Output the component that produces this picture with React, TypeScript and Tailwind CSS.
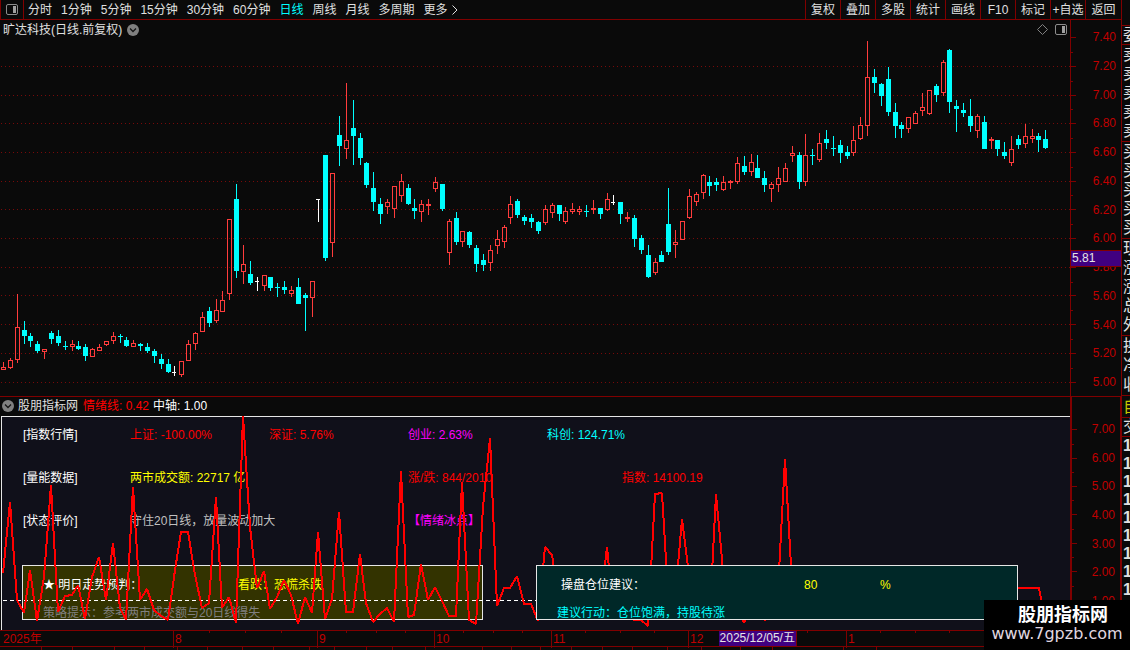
import { clsx } from 'clsx'

type Kind = 'up' | 'down' | 'flat'
type Bar = [x: number, high: number, top: number, bottom: number, low: number]

const PERIODS = ['分时', '1分钟', '5分钟', '15分钟', '30分钟', '60分钟', '日线', '周线', '月线', '多周期']
const TOOLS = ['复权', '叠加', '多股', '统计', '画线', 'F10', '标记', '+自选', '返回']

const PRICE_LABELS = ['7.40', '7.20', '7.00', '6.80', '6.60', '6.40', '6.20', '6.00', '5.80', '5.60', '5.40', '5.20', '5.00']
const PRICE_TICKS = [37, 66, 95, 123, 152, 181, 209, 238, 267, 295, 324, 353, 382]
const PRICE_MINOR = [52, 81, 109, 138, 167, 195, 224, 282, 310, 339, 368]

const MOOD_LABELS = ['7.00', '6.00', '5.00', '4.00', '3.00', '2.00', '1.00']
const MOOD_TICKS = [429, 458, 486, 514, 543, 571, 600]
const MOOD_MINOR = [444, 472, 500, 529, 557, 586]

const UP: Bar[] = [
  [3, 362, 367, 370, 370], [10, 358, 360, 368, 369], [17, 294, 327, 360, 363], [44, 349, 349, 352, 359],
  [72, 340, 344, 347, 351], [92, 348, 349, 357, 357], [99, 344, 347, 351, 351], [106, 341, 341, 345, 346],
  [113, 332, 336, 341, 344], [133, 340, 343, 347, 347], [181, 361, 361, 375, 377], [188, 340, 344, 361, 361],
  [195, 332, 333, 344, 350], [202, 312, 317, 332, 332], [216, 299, 310, 321, 323], [222, 291, 300, 312, 312],
  [229, 219, 219, 294, 300], [243, 245, 264, 272, 284], [264, 275, 275, 286, 291], [291, 286, 290, 294, 297],
  [312, 281, 281, 298, 317], [332, 173, 173, 243, 257], [346, 83, 140, 149, 159], [387, 199, 202, 207, 214],
  [394, 186, 186, 209, 218], [401, 174, 181, 196, 202], [421, 200, 204, 212, 222], [428, 199, 204, 206, 215],
  [435, 177, 182, 189, 192], [449, 219, 221, 253, 265], [462, 231, 231, 242, 247], [490, 245, 250, 263, 271],
  [497, 230, 239, 246, 254], [504, 225, 227, 242, 248], [510, 196, 204, 218, 224], [545, 205, 209, 223, 225],
  [552, 203, 205, 213, 218], [565, 207, 211, 222, 224], [572, 203, 209, 212, 214], [579, 206, 209, 212, 215],
  [593, 200, 208, 210, 214], [607, 193, 199, 210, 211], [627, 212, 217, 219, 222], [655, 258, 262, 273, 275],
  [675, 230, 242, 245, 258], [682, 221, 221, 240, 240], [689, 189, 196, 218, 219], [696, 192, 194, 202, 206],
  [703, 174, 175, 193, 199], [723, 176, 182, 190, 191], [730, 180, 181, 183, 189], [737, 157, 163, 182, 184],
  [751, 154, 162, 172, 176], [771, 182, 184, 189, 202], [778, 167, 178, 185, 192], [785, 163, 168, 182, 182],
  [792, 146, 153, 156, 162], [805, 134, 155, 182, 186], [819, 133, 143, 160, 162], [853, 126, 140, 153, 156],
  [860, 117, 125, 139, 140], [867, 41, 77, 126, 136], [908, 117, 117, 129, 133], [915, 111, 113, 124, 124],
  [922, 93, 107, 111, 116], [929, 90, 90, 114, 115], [943, 60, 62, 93, 96], [977, 114, 116, 131, 138],
  [991, 137, 139, 141, 149], [1011, 136, 149, 163, 166], [1025, 124, 136, 144, 148], [1032, 129, 136, 139, 143],
]

const DOWN: Bar[] = [
  [24, 321, 330, 336, 344], [30, 333, 336, 341, 347], [37, 341, 344, 351, 353], [51, 331, 333, 339, 344],
  [58, 330, 336, 343, 346], [65, 341, 346, 347, 350], [78, 341, 346, 349, 350], [85, 344, 347, 356, 361],
  [120, 334, 336, 337, 343], [126, 337, 340, 346, 347], [140, 343, 344, 346, 351], [147, 343, 347, 351, 353],
  [154, 349, 351, 356, 363], [161, 354, 359, 364, 369], [168, 359, 364, 372, 373], [209, 307, 311, 323, 327],
  [236, 184, 199, 271, 278], [250, 261, 274, 283, 285], [270, 277, 277, 288, 291], [277, 283, 287, 288, 297],
  [284, 281, 287, 290, 294], [298, 278, 287, 304, 304], [305, 293, 295, 298, 331], [325, 155, 155, 258, 261],
  [339, 116, 135, 146, 166], [353, 100, 128, 136, 165], [360, 133, 138, 158, 165], [366, 162, 163, 185, 188],
  [373, 172, 188, 202, 211], [380, 198, 204, 214, 224], [408, 184, 188, 204, 205], [414, 199, 208, 211, 219],
  [442, 184, 184, 209, 211], [456, 212, 218, 242, 245], [469, 231, 232, 245, 248], [476, 245, 248, 264, 272],
  [483, 254, 260, 265, 271], [517, 199, 201, 215, 218], [524, 215, 217, 221, 225], [531, 214, 218, 222, 228],
  [538, 221, 222, 231, 234], [559, 205, 205, 214, 221], [586, 205, 211, 212, 217], [600, 208, 208, 214, 219],
  [620, 202, 202, 214, 224], [634, 215, 218, 239, 247], [641, 235, 238, 250, 254], [648, 245, 255, 277, 278],
  [661, 251, 255, 262, 262], [668, 188, 224, 252, 255], [709, 176, 182, 186, 196], [716, 178, 182, 185, 191],
  [744, 156, 166, 172, 175], [757, 155, 168, 178, 178], [764, 171, 178, 185, 192], [799, 152, 155, 182, 189],
  [812, 149, 155, 156, 165], [826, 130, 139, 143, 149], [833, 136, 148, 149, 156], [840, 140, 145, 153, 163],
  [847, 146, 152, 156, 159], [874, 69, 77, 83, 93], [881, 83, 84, 96, 106], [888, 67, 79, 112, 116],
  [895, 103, 112, 126, 138], [901, 122, 125, 129, 138], [936, 84, 86, 95, 102], [949, 49, 50, 102, 113],
  [956, 100, 106, 109, 132], [963, 103, 110, 113, 117], [970, 99, 116, 126, 132], [984, 116, 122, 149, 149],
  [997, 140, 140, 149, 156], [1004, 142, 152, 156, 159], [1018, 135, 139, 145, 149], [1038, 133, 136, 140, 152],
  [1045, 130, 139, 148, 149],
]

const FLAT: Bar[] = [
  [174, 366, 372, 373, 376], [257, 277, 281, 282, 291], [318, 199, 199, 200, 222], [613, 195, 202, 203, 205],
]

const MOOD_LINE =
  '3,573 10,502 17,600 24,613 30,570 37,621 44,577 51,485 58,612 65,596 72,595 78,585 85,619 92,577 99,557 106,600 ' +
  '113,543 120,608 126,620 133,487 140,600 147,589 154,610 161,616 168,620 175,570 181,532 188,532 195,575 202,608 ' +
  '209,603 216,497 222,608 229,597 236,623 243,416 250,527 257,588 264,571 270,609 277,597 284,580 291,595 298,624 ' +
  '305,597 312,613 318,532 325,619 332,599 339,512 346,612 353,612 360,554 366,603 373,622 380,614 387,608 394,622 ' +
  '401,471 408,617 414,615 421,564 428,600 435,587 442,601 449,616 456,616 462,482 469,620 476,624 483,507 490,438 ' +
  '497,606 504,588 510,588 517,576 524,604 531,604 538,621 545,547 552,555 559,600 565,610 600,610 607,547 613,610 ' +
  '634,620 641,620 648,626 655,494 662,493 669,610 675,600 682,519 689,575 696,600 710,612 716,494 723,570 737,610 ' +
  '744,623 751,606 758,606 765,621 771,600 778,590 785,459 792,583 799,606 860,606 960,600 1010,588 1039,588 1042,604'

// year / month cells of the time axis
const MONTHS = ['2025年', '8', '9', '10', '11', '12', '1']
const DAY_TICKS = [209, 245, 281, 346, 376, 405, 463, 493, 522, 585, 620, 654, 723, 757, 807, 880, 915, 949]

// relative widths of the tab strip under the time axis
const TAB_WIDTHS = [42, 31, 42, 29, 33, 30, 34, 31, 36, 24, 32, 26, 32, 58, 28, 29, 31, 30, 30, 35, 34, 38, 32, 72, 32, 250]

const QUOTE_GROUPS = [
  { rows: ['委'], className: 'h-5 border-b' },
  { rows: ['卖', '卖', '卖', '卖', '卖'], className: 'h-[97px] border-b' },
  { rows: ['买', '买', '买', '买', '买'], className: 'h-[97px] border-b' },
  { rows: ['现', '涨', '涨', '总', '外'], className: 'h-[97px] border-b' },
  { rows: ['换', '净', '收'], className: 'h-[60px] border-b' },
  { rows: ['自'], className: 'h-[22px] border-b text-[#c8c800]' },
  { rows: ['交'], className: 'h-[19px] border-b' },
  { rows: ['1', '1', '1', '1', '1', '1', '1', '1', '1'], className: 'h-[162px] font-bold' },
]

const CANDLE_COLOR: Record<Kind, string> = { up: '#ff3c3c', down: '#00ffff', flat: '#ffffff' }

function Candle({ bar, kind }: { bar: Bar; kind: Kind }) {
  const [x, high, top, bottom, low] = bar
  const color = CANDLE_COLOR[kind]
  const hollow = kind === 'up' && bottom - top > 2
  return (
    <g fill={color}>
      {top > high && <rect x={x} y={high} width={1} height={top - high} />}
      {low > bottom && <rect x={x} y={bottom} width={1} height={low - bottom} />}
      {hollow ? (
        <rect x={x - 1.5} y={top + 0.5} width={4} height={bottom - top - 1} fill="none" stroke={color} />
      ) : (
        <rect x={x - 2} y={top} width={kind === 'flat' ? 4 : 5} height={bottom - top} />
      )}
    </g>
  )
}

function PanelIcon() {
  return (
    <svg width="12" height="11" viewBox="0 0 12 11" className="shrink-0">
      <rect x="0.5" y="0.5" width="11" height="10" rx="1.5" fill="none" stroke="#8c8c8c" />
      <rect x="7" y="2" width="3" height="7" fill="#a0a0a0" />
    </svg>
  )
}

function CollapseButton({ label }: { label: string }) {
  return (
    <button type="button" aria-label={label} className="shrink-0">
      <svg width="12" height="12" viewBox="0 0 12 12" className="block">
        <circle cx="6" cy="6" r="6" fill="#808080" />
        <path d="M3 4.5L6 7.5L9 4.5" fill="none" stroke="#141414" strokeWidth="1.3" />
      </svg>
    </button>
  )
}

function Toolbar() {
  return (
    <nav className="flex h-5 shrink-0 items-stretch border-b border-[#800000]">
      <button type="button" aria-label="侧栏" className="flex w-6 items-center justify-center border-x border-[#800000]">
        <PanelIcon />
      </button>
      <div className="flex flex-1 items-center gap-[9px] pl-1">
        {PERIODS.map(p => (
          <button key={p} type="button" className={clsx('whitespace-nowrap', p === '日线' && 'text-[#00ffff]')}>
            {p}
          </button>
        ))}
        <button type="button" className="flex items-center gap-1 whitespace-nowrap">
          更多
          <svg width="6" height="10" viewBox="0 0 6 10">
            <path d="M0.5 0.5L5 5L0.5 9.5" fill="none" stroke="#e0e0e0" />
          </svg>
        </button>
      </div>
      <div className="flex">
        {TOOLS.map(t => (
          <button
            key={t}
            type="button"
            className="w-[35px] whitespace-nowrap border-l border-[#800000] text-center last:w-9"
          >
            {t}
          </button>
        ))}
      </div>
    </nav>
  )
}

function PriceChart() {
  return (
    <div className="flex min-w-0 flex-1 flex-col">
      <div className="flex h-5 shrink-0 items-center justify-between px-[3px] pb-px">
        <div className="flex items-center gap-[5px]">
          <h1>旷达科技(日线.前复权)</h1>
          <CollapseButton label="展开主图" />
        </div>
        <div className="flex items-center gap-[7px]">
          <svg width="11" height="11" viewBox="0 0 11 11">
            <path d="M5.5 0.5L10.5 5.5L5.5 10.5L0.5 5.5Z" fill="none" stroke="#808080" />
          </svg>
          <PanelIcon />
        </div>
      </div>
      <svg
        viewBox="0 40 1070 356"
        preserveAspectRatio="none"
        shapeRendering="crispEdges"
        className="min-h-0 w-full flex-1"
      >
        {PRICE_TICKS.slice(1).map(y => (
          <line key={y} x1="1" x2="1070" y1={y + 0.5} y2={y + 0.5} stroke="#780a0a" strokeDasharray="1 3" />
        ))}
        {UP.map(b => <Candle key={b[0]} bar={b} kind="up" />)}
        {DOWN.map(b => <Candle key={b[0]} bar={b} kind="down" />)}
        {FLAT.map(b => <Candle key={b[0]} bar={b} kind="flat" />)}
      </svg>
    </div>
  )
}

interface ScaleProps {
  labels: string[]
  major: number[]
  minor: number[]
  viewBox: string
  className: string
}

function Scale({ labels, major, minor, viewBox, className }: ScaleProps) {
  return (
    <div className={clsx('relative flex w-[51px] shrink-0 flex-col justify-between pr-[5px] text-right text-[#c00000]', className)}>
      <svg viewBox={viewBox} preserveAspectRatio="none" className="absolute inset-y-0 left-0 h-full w-1.5" fill="#800000">
        {major.map(y => <rect key={y} x="0" y={y} width="5" height="1" />)}
        {minor.map(y => <rect key={y} x="0" y={y} width="2" height="1" />)}
      </svg>
      {labels.map(l => <span key={l} className="leading-4">{l}</span>)}
    </div>
  )
}

function MoodPanel() {
  return (
    <div className="relative">
      <div className="ml-px border-l border-t border-[#e6e6e6] bg-[#10101a] pb-2.5 pt-2.5">
        <div className="grid grid-cols-[107fr_139fr_139fr_139fr_523fr] gap-y-[27px] whitespace-nowrap pl-[21px] leading-4">
          <span className="text-white">[指数行情]</span>
          <span className="text-[#ff0000]">上证: -100.00%</span>
          <span className="text-[#ff0000]">深证: 5.76%</span>
          <span className="text-[#ff00ff]">创业: 2.63%</span>
          <span className="text-[#00ffff]">科创: 124.71%</span>

          <span className="text-white">[量能数据]</span>
          <span className="col-span-2 text-[#ffff00]">两市成交额: 22717 亿</span>
          <span className="text-[#ff0000]">涨/跌: 844/2010</span>
          <span className="pl-[75px] text-[#ff0000]">指数: 14100.19</span>

          <span className="text-white">[状态评价]</span>
          <span className="col-span-2 text-[#c0c0c0]">守住20日线，放量波动加大</span>
          <span className="text-[#ff00ff]">【情绪冰点】</span>
        </div>

        <div className="mt-9 grid grid-cols-[461fr_482fr] gap-x-[53px] whitespace-nowrap pl-5 pr-[52px] leading-3">
          <section className="grid grid-cols-[195fr_244fr] gap-y-4 border border-[#e6e6e6] bg-[#333300] pl-5 pt-[13px]">
            <h2 className="text-white">★ 明日走势预判：</h2>
            <span className="text-[#ffff00]">看跌：恐慌杀跌</span>
            <p className="col-span-2 text-[#808080]">策略提示：参考两市成交额与20日线得失</p>
          </section>
          <section className="relative z-10 grid grid-cols-[247fr_76fr_137fr] gap-y-4 border border-[#e6e6e6] bg-[#002828] pl-5 pt-[13px]">
            <h2 className="pl-1 text-white">操盘仓位建议：</h2>
            <span className="text-[#ffff00]">80</span>
            <span className="text-[#ffff00]">%</span>
            <p className="col-span-3 text-[#00ffff]">建议行动：仓位饱满，持股待涨</p>
          </section>
        </div>
      </div>
      <svg
        viewBox="0 416 1070 214"
        preserveAspectRatio="none"
        shapeRendering="crispEdges"
        className="pointer-events-none absolute inset-0 h-full w-full"
        fill="none"
      >
        <line x1="3" x2="540" y1="600.5" y2="600.5" stroke="#ffffff" strokeDasharray="4 3" />
        <polyline points={MOOD_LINE} stroke="#ff0000" strokeWidth="2" strokeLinejoin="bevel" />
      </svg>
    </div>
  )
}

function TimeAxis() {
  return (
    <div className="relative grid h-4 shrink-0 grid-cols-[173fr_144fr_117fr_117fr_137fr_158fr_275fr] border-t border-[#800000] leading-[17px] text-[#c00000]">
      {MONTHS.map((m, i) => (
        <span key={m} className={clsx('whitespace-nowrap', i === 0 ? 'pl-[3px]' : 'border-l border-[#800000] pl-px')}>
          {m}
        </span>
      ))}
      <svg viewBox="0 0 1121 2" preserveAspectRatio="none" className="absolute left-0 top-0 h-0.5 w-full" fill="#800000">
        {DAY_TICKS.map(x => <rect key={x} x={x} y="0" width="1" height="2" />)}
      </svg>
      <time className="absolute inset-y-0 left-[64.1%] whitespace-nowrap border-r border-[#800000] bg-[#400080] px-px leading-[15px] text-[#e6e6e6]">
        2025/12/05/五
      </time>
    </div>
  )
}

export default function App() {
  return (
    <div className="relative flex h-screen min-h-[480px] overflow-hidden bg-[#0a0a0a] font-['Liberation_Sans','Noto_Sans_CJK_SC',sans-serif] text-xs text-[#e0e0e0]">
      <main className="flex min-w-0 flex-1 flex-col">
        <Toolbar />

        <div className="flex min-h-0 flex-1">
          <PriceChart />
          <div className="relative flex">
            <Scale
              labels={PRICE_LABELS}
              major={PRICE_TICKS}
              minor={PRICE_MINOR}
              viewBox="0 20 6 376"
              className="border-l border-[#800000] pb-1.5 pt-[9px]"
            />
            {/* price under the crosshair */}
            <span className="absolute left-px right-0 top-[61.2%] h-[17px] border-y border-[#800000] bg-[#400080] pl-px leading-[15px] text-[#e6e6e6]">
              5.81
            </span>
          </div>
        </div>

        <div className="flex shrink-0 border-t border-[#800000]">
          <div className="min-w-0 flex-1">
            <div className="flex h-[19px] items-center gap-1 whitespace-nowrap pb-0.5 pl-0.5">
              <CollapseButton label="展开副图" />
              <h2>股朋指标网</h2>
              <span className="pl-px text-[#ff0000]">情绪线: 0.42</span>
              <span className="text-white">中轴: 1.00</span>
            </div>
            <MoodPanel />
          </div>
          <Scale
            labels={MOOD_LABELS}
            major={MOOD_TICKS}
            minor={MOOD_MINOR}
            viewBox="0 397 6 233"
            className="border-l-2 border-r border-[#800000] pb-[21px] pt-6"
          />
        </div>

        <TimeAxis />
        <div className="flex h-1 shrink-0 divide-x divide-[#800000] border-t border-[#800000]">
          {TAB_WIDTHS.map((w, i) => <span key={i} style={{ flexGrow: w, flexBasis: 0 }} />)}
        </div>
      </main>

      <aside className="flex w-[9px] shrink-0 flex-col overflow-hidden border-l border-[#800000] pt-[25px] text-base">
        {QUOTE_GROUPS.map((g, i) => (
          <div
            key={i}
            className={clsx('flex shrink-0 flex-col justify-around border-[#800000]', i === 0 && 'border-t', g.className)}
          >
            {g.rows.map((r, j) => <span key={j} className="whitespace-nowrap pl-px leading-[18px]">{r}</span>)}
          </div>
        ))}
      </aside>

      {/* site badge */}
      <div className="absolute bottom-0 right-0 z-20 flex h-[50px] w-[146px] flex-col items-center bg-black pt-[5px]">
        <strong className="pl-3 text-[18px] leading-5 text-white">股朋指标网</strong>
        <a href="#" className="font-['DejaVu_Sans',sans-serif] text-base leading-[18px] text-[#e0d8e0]">www.7gpzb.com</a>
      </div>
    </div>
  )
}
